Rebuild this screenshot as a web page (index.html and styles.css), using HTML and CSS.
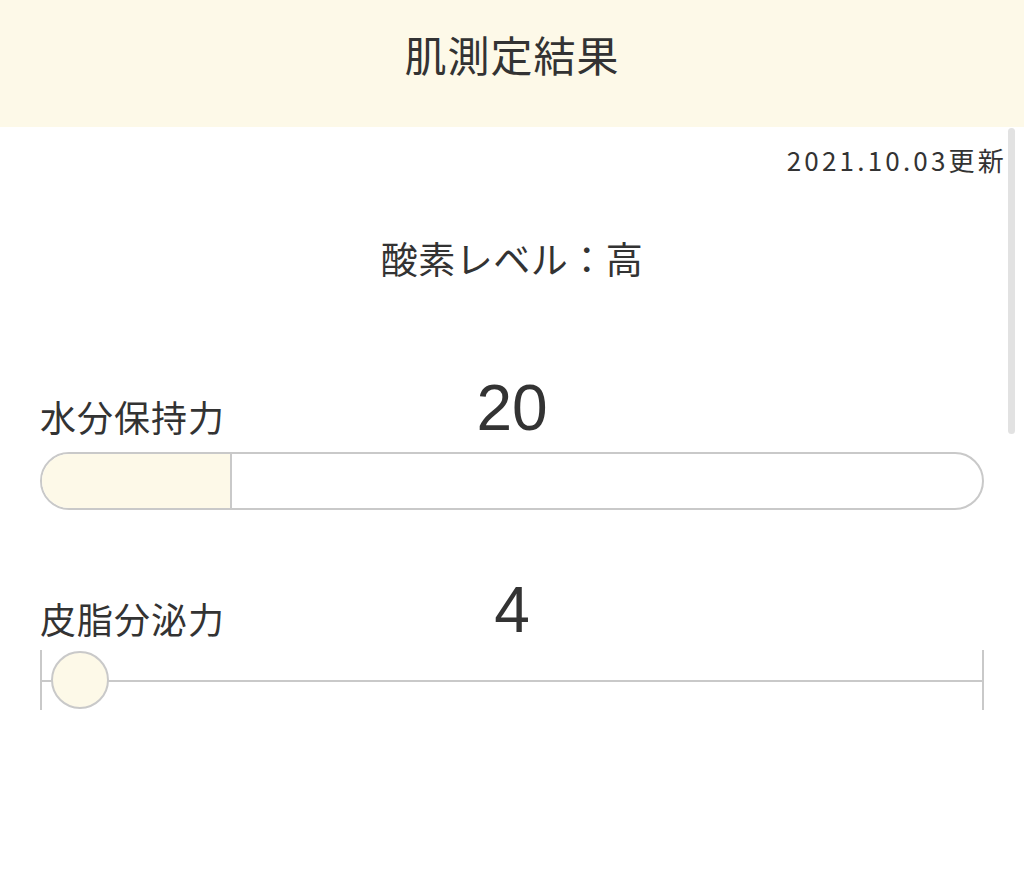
FILE: index.html
```html
<!DOCTYPE html>
<html lang="ja">
<head>
<meta charset="utf-8">
<link rel="stylesheet" href="styles.css">
</head>
<body>
<header class="header"><h1 class="title">肌測定結果</h1></header>
<main class="content">
  <div class="updated">2021.10.03更新</div>
  <div class="oxygen">酸素レベル：高</div>
  <section class="metric metric-water">
    <div class="metric-head">
      <span class="metric-label">水分保持力</span>
      <span class="metric-value">20</span>
    </div>
    <div class="bar"><div class="bar-fill" style="width:20%"></div></div>
  </section>
  <section class="metric metric-sebum">
    <div class="metric-head">
      <span class="metric-label">皮脂分泌力</span>
      <span class="metric-value">4</span>
    </div>
    <div class="slider">
      <div class="slider-line"></div>
      <div class="slider-thumb" style="left:4%"></div>
    </div>
  </section>
</main>
<div class="scrollbar"></div>
</body>
</html>
```

FILE: styles.css
```css
html, body {
  margin: 0;
  padding: 0;
  background: #fff;
  color: #333;
  font-family: "Noto Sans CJK JP", "Noto Sans", sans-serif;
}
.header {
  height: 127px;
  background: #fdf9e8;
  display: flex;
  align-items: center;
  justify-content: center;
}
.title {
  margin: 0;
  font-size: 42px;
  font-weight: 400;
  letter-spacing: 1px;
  color: #333;
  line-height: 1;
  padding-bottom: 20px;
}
.content {
  padding: 0 40px;
}
.updated {
  text-align: right;
  margin-right: -23px;
  margin-top: 20px;
  font-size: 26px;
  letter-spacing: 3.2px;
  line-height: 1;
}
.oxygen {
  text-align: center;
  font-size: 37px;
  letter-spacing: 0.5px;
  line-height: 1;
  margin-top: 67px;
}
.metric-head {
  position: relative;
  display: flex;
  align-items: flex-end;
  height: 64px;
}
.metric-water .metric-head {
  margin-top: 99px;
}
.metric-sebum .metric-head {
  margin-top: 68px;
}
.metric-label {
  font-size: 36px;
  letter-spacing: 1px;
  line-height: 1;
  padding-bottom: 6px;
}
.metric-value {
  position: absolute;
  left: 0;
  right: 0;
  top: 0;
  text-align: center;
  font-size: 64px;
  line-height: 1;
  font-family: "Liberation Sans", "Noto Sans", sans-serif;
}
.bar {
  margin-top: 12px;
  height: 54px;
  border: 2px solid #c9c9c9;
  border-radius: 30px;
  overflow: hidden;
  display: flex;
}
.bar-fill {
  background: #fdf9e8;
  border-right: 2px solid #c9c9c9;
}
.slider {
  position: relative;
  margin-top: 8px;
  height: 60px;
  border-left: 2px solid #c9c9c9;
  border-right: 2px solid #c9c9c9;
}
.slider-line {
  position: absolute;
  left: 0;
  right: 0;
  top: 30px;
  height: 2px;
  background: #c9c9c9;
}
.slider-thumb {
  position: absolute;
  top: 1px;
  width: 54px;
  height: 54px;
  margin-left: -29px;
  border: 2px solid #c9c9c9;
  border-radius: 50%;
  background: #fdf9e8;
}
.scrollbar {
  position: absolute;
  top: 128px;
  left: 1008px;
  width: 7px;
  height: 306px;
  background: #e2e2e2;
  border-radius: 4px;
}
```
